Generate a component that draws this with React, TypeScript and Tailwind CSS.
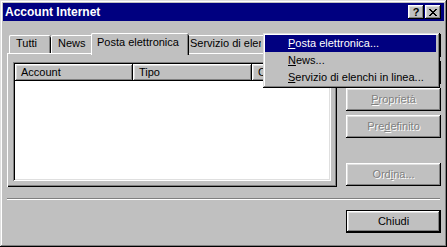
const raised =
  "shadow-[inset_-1px_-1px_#000,inset_1px_1px_#fff,inset_-2px_-2px_#808080,inset_2px_2px_#dfdfdf]";
const sunken =
  "shadow-[inset_1px_1px_#808080,inset_-1px_-1px_#fff,inset_2px_2px_#000,inset_-2px_-2px_#dfdfdf]";
const etched = "text-[#808080] [text-shadow:1px_1px_0_#fff]";

function TitleButton({ children }: { children: React.ReactNode }) {
  return (
    <div className={`flex h-[14px] w-[16px] items-center justify-center bg-[#c0c0c0] ${raised}`}>
      {children}
    </div>
  );
}

function Tab({ children, active }: { children: React.ReactNode; active?: boolean }) {
  if (active)
    return (
      <div className="relative z-10 -mx-[2px] -mb-[2px] flex h-[22px] items-start whitespace-nowrap rounded-t-[2px] bg-[#c0c0c0] px-[6px] pt-[4px] shadow-[inset_1px_0_#fff,inset_0_1px_#fff,inset_-1px_0_#000,inset_-2px_0_#808080]">
        {children}
      </div>
    );
  return (
    <div className="flex h-[18px] items-start whitespace-nowrap rounded-t-[2px] bg-[#c0c0c0] px-[7px] pt-[3px] shadow-[inset_1px_0_#fff,inset_0_1px_#fff,inset_-1px_0_#000,inset_-2px_0_#808080]">
      {children}
    </div>
  );
}

function Button({
  children,
  disabled,
  isDefault,
}: {
  children?: React.ReactNode;
  disabled?: boolean;
  isDefault?: boolean;
}) {
  if (isDefault)
    return (
      <div className="h-[23px] w-[95px] border border-black bg-[#c0c0c0]">
        <div className={`flex h-full items-center justify-center ${raised}`}>{children}</div>
      </div>
    );
  return (
    <div
      className={`flex h-[23px] w-[95px] items-center justify-center bg-[#c0c0c0] ${raised} ${disabled ? etched : ""}`}
    >
      {children}
    </div>
  );
}

function HeaderCell({ label, w }: { label?: string; w?: string }) {
  return (
    <div
      className={`flex h-[17px] shrink-0 items-center overflow-hidden whitespace-nowrap bg-[#c0c0c0] pl-[6px] ${raised} ${w ?? "flex-1"}`}
    >
      {label}
    </div>
  );
}

export default function App() {
  return (
    <div className="relative h-[247px] w-[447px] overflow-hidden bg-[#c0c0c0] px-[3px] pt-[3px] font-['Liberation_Sans',Arial,sans-serif] text-[11px] leading-none text-black shadow-[inset_-1px_-1px_#000,inset_1px_1px_#dfdfdf,inset_-2px_-2px_#808080,inset_2px_2px_#fff]">
      {/* title bar */}
      <div className="flex h-[18px] items-center justify-between bg-[#000080] pl-[2px] pr-[3px]">
        <span className="text-[12px] font-bold text-white">Account Internet</span>
        <div className="flex gap-[1px]">
          <TitleButton>
            <span className="text-[11px] font-bold">?</span>
          </TitleButton>
          <TitleButton>
            <svg width="8" height="7" viewBox="0 0 8 7" shapeRendering="crispEdges">
              <path
                d="M0 0h2v1H0zM6 0h2v1H6zM1 1h2v1H1zM5 1h2v1H5zM2 2h4v1H2zM3 3h2v1H3zM2 4h4v1H2zM1 5h2v1H1zM5 5h2v1H5zM0 6h2v1H0zM6 6h2v1H6z"
                fill="#000"
              />
            </svg>
          </TitleButton>
        </div>
      </div>

      {/* main */}
      <div className="mt-[12px] flex gap-[9px] pl-[4px] pr-[3px]">
        <div className="flex w-[330px] flex-col">
          <div className="flex h-[20px] items-end pl-[2px]">
            <div className="w-[42px]">
              <Tab>Tutti</Tab>
            </div>
            <div className="w-[42px]">
              <Tab>News</Tab>
            </div>
            <div className="-mr-[4px] w-[94px]">
              <Tab active>Posta elettronica</Tab>
            </div>
            <div className="w-[100px]">
              <Tab>
                {/* the rest of this label lies under the popup menu */}
                <span className="block w-[71px] overflow-hidden">Servizio di elenchi</span>
              </Tab>
            </div>
          </div>
          <div className="h-[134px] bg-[#c0c0c0] px-[6px] pb-[6px] pt-[9px] shadow-[inset_1px_1px_#fff,inset_-1px_-1px_#000,inset_-2px_-2px_#808080]">
            <div className={`h-full bg-white p-[2px] ${sunken}`}>
              <div className="flex">
                <HeaderCell label="Account" w="w-[118px]" />
                <HeaderCell label="Tipo" w="w-[119px]" />
                <HeaderCell label="C" w="w-[14px]" />
                <HeaderCell />
              </div>
            </div>
          </div>
        </div>

        {/* the top two buttons are hidden by the menu */}
        <div className="flex flex-col pt-[1px]">
          <div className="flex flex-col gap-[4px]">
            <Button />
            <Button />
            <Button disabled>
              <span>
                <u>P</u>roprietà
              </span>
            </Button>
            <Button disabled>
              <span>
                Pre<u>d</u>efinito
              </span>
            </Button>
          </div>
          <div className="mt-[25px]">
            <Button disabled>
              <span>
                Ord<u>i</u>na...
              </span>
            </Button>
          </div>
        </div>
      </div>

      {/* separator */}
      <div className="ml-[4px] mr-[4px] mt-[11px] h-[2px] border-b border-t border-b-white border-t-[#808080]" />

      <div className="mt-[10px] flex justify-end pr-[3px]">
        <Button isDefault>Chiudi</Button>
      </div>

      {/* popup menu */}
      <div className="absolute left-[263px] top-[33px] z-20 h-[55px] w-[177px] bg-[#c0c0c0] pb-[2px] pl-[2px] pr-[4px] pt-[2px] shadow-[inset_-1px_-1px_#000,inset_1px_1px_#dfdfdf,inset_-2px_-2px_#808080,inset_2px_2px_#fff]">
        <div className="flex h-[17px] items-center bg-[#000080] pl-[23px] text-white">
          <span>
            <u>P</u>osta elettronica...
          </span>
        </div>
        <div className="flex h-[17px] items-center pl-[23px]">
          <span>
            <u>N</u>ews...
          </span>
        </div>
        <div className="flex h-[17px] items-center pl-[23px]">
          <span>
            <u>S</u>ervizio di elenchi in linea...
          </span>
        </div>
      </div>
    </div>
  );
}
